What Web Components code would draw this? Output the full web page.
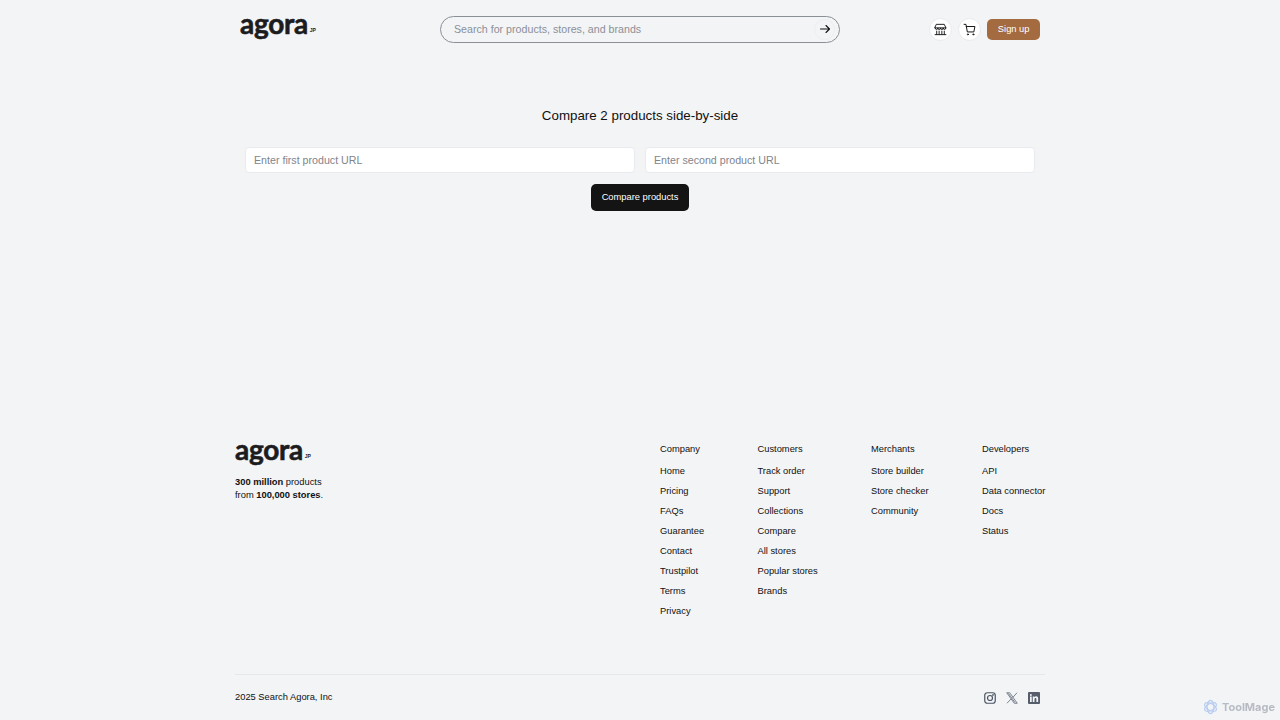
<!DOCTYPE html>
<html lang="en">
<head>
<meta charset="utf-8">
<title>Compare products - Agora</title>
<style>
  html, body { margin: 0; height: 720px; overflow: hidden; background: #f3f4f6; }
  body { font-family: "Liberation Sans", Arial, sans-serif; color: #111; }
</style>
</head>
<body>
<agora-page>
  <site-header slot="header"></site-header>
  <compare-form slot="main"></compare-form>
  <site-footer slot="footer"></site-footer>
</agora-page>
<tool-mage></tool-mage>

<script>
class AgoraPage extends HTMLElement {
  constructor() {
    super();
    this.attachShadow({ mode: 'open' });
    this.shadowRoot.innerHTML = `
      <style>
        :host { display: flex; flex-direction: column; width: 810px; height: 720px; margin: 0 auto; }
        main { flex: 1; }
      </style>
      <slot name="header"></slot>
      <main><slot name="main"></slot></main>
      <slot name="footer"></slot>`;
  }
}

class AgoraLogo extends HTMLElement {
  constructor() {
    super();
    this.attachShadow({ mode: 'open' });
    this.shadowRoot.innerHTML = `
      <style>
        :host { display: inline-flex; align-items: baseline; color: #1c1c1e; line-height: 1; }
        .word {
          font: 700 28px Lato, "Liberation Sans", sans-serif;
          letter-spacing: -0.3px;
          -webkit-text-stroke: 0.6px currentColor;
        }
        .jp { font: 700 5px "Liberation Sans", sans-serif; margin-left: 2px; position: relative; top: -2px; }
      </style>
      <span class="word">agora</span><span class="jp">JP</span>`;
  }
}

class SearchBox extends HTMLElement {
  constructor() {
    super();
    this.attachShadow({ mode: 'open' });
    this.shadowRoot.innerHTML = `
      <style>
        :host { display: flex; align-items: center; box-sizing: border-box; width: 400px; height: 27px;
          padding: 0 4px 0 13px; border: 1px solid #8b8f96; border-radius: 14px; }
        input { flex: 1; min-width: 0; border: 0; outline: 0; padding: 0; background: transparent;
          font: 10.67px "Liberation Sans", sans-serif; color: #111; }
        input::placeholder { color: #8b9099; opacity: 1; }
        button { display: flex; align-items: center; justify-content: center; width: 21px; height: 21px; padding: 0;
          border: 1px solid #eceef0; border-radius: 50%; background: #f3f4f6; color: #111; }
      </style>
      <input placeholder="Search for products, stores, and brands">
      <button aria-label="Search">
        <svg width="12" height="12" viewBox="0 0 24 24" fill="none" stroke="currentColor" stroke-width="2.2" stroke-linecap="round" stroke-linejoin="round"><path d="M3 12h18M14 5l7 7-7 7"/></svg>
      </button>`;
  }
}

class IconButton extends HTMLElement {
  constructor() {
    super();
    this.attachShadow({ mode: 'open' });
    this.shadowRoot.innerHTML = `
      <style>
        :host { display: flex; flex: none; align-items: center; justify-content: center; box-sizing: border-box;
          width: 23px; height: 23px; border: 1px solid #e8eaed; border-radius: 50%; background: #fff; color: #111; }
      </style>
      <slot></slot>`;
  }
}

class SiteHeader extends HTMLElement {
  constructor() {
    super();
    this.attachShadow({ mode: 'open' });
    this.shadowRoot.innerHTML = `
      <style>
        :host { display: grid; grid-template-columns: 1fr 400px 1fr; align-items: center; height: 58px; padding: 0 5px; box-sizing: border-box; }
        agora-logo { justify-self: start; margin-bottom: 13px; }
        .actions { display: flex; align-items: center; justify-content: flex-end; gap: 6px; }
        .signup { height: 21px; padding: 0 10.5px; border: 0; border-radius: 5px; background: #a36b3f; color: #fff;
          font: 9.33px "Liberation Sans", sans-serif; }
      </style>
      <agora-logo></agora-logo>
      <search-box></search-box>
      <div class="actions">
        <icon-button>
          <svg width="13" height="13" viewBox="0 0 24 24" fill="none" stroke="currentColor" stroke-width="1.7" stroke-linejoin="round" stroke-linecap="round"><path d="M5 2.500h14l3 6.500H2zM2 9a2.500 3 0 0 0 5 0 2.500 3 0 0 0 5 0 2.500 3 0 0 0 5 0 2.500 3 0 0 0 5 0M5 15v6M19 15v6M2 21.500h20M9.500 15v6M14.500 15v6"/></svg>
        </icon-button>
        <icon-button>
          <svg width="13" height="13" viewBox="0 0 24 24" fill="none" stroke="currentColor" stroke-width="1.8" stroke-linecap="round" stroke-linejoin="round"><path d="M2 2.500h3.500l2.500 14h12l2-10H6"/><circle cx="9" cy="21" r="1"/><circle cx="19" cy="21" r="1"/></svg>
        </icon-button>
        <button class="signup">Sign up</button>
      </div>`;
  }
}

class CompareForm extends HTMLElement {
  constructor() {
    super();
    this.attachShadow({ mode: 'open' });
    this.shadowRoot.innerHTML = `
      <style>
        :host { display: flex; flex-direction: column; align-items: center; padding: 49px 10px 0; }
        h1 { margin: 0 0 23px; font: 400 13.33px/17px "Liberation Sans", sans-serif; color: #111; }
        .inputs { display: grid; grid-template-columns: 1fr 1fr; gap: 10px; width: 100%; margin-bottom: 11px; }
        input { box-sizing: border-box; width: 100%; height: 26px; padding: 0 8px 1px; border: 1px solid #e8eaed; border-radius: 4px;
          background: #fff; outline: 0; font: 10.67px "Liberation Sans", sans-serif; color: #111; }
        input::placeholder { color: #7f848c; opacity: 1; }
        button { height: 27px; padding: 0 11px 1px; border: 0; border-radius: 5px; background: #141414; color: #fff;
          font: 9.33px "Liberation Sans", sans-serif; }
      </style>
      <h1>Compare 2 products side-by-side</h1>
      <div class="inputs">
        <input placeholder="Enter first product URL">
        <input placeholder="Enter second product URL">
      </div>
      <button>Compare products</button>`;
  }
}

class FooterColumn extends HTMLElement {
  constructor() {
    super();
    this.attachShadow({ mode: 'open' });
    const items = this.getAttribute('items').split('|');
    this.shadowRoot.innerHTML = `
      <style>
        :host { display: flex; flex-direction: column; font-size: 9.33px; line-height: 12px; color: #111; white-space: nowrap; }
        h2 { margin: 0 0 6px; font: inherit; height: 12px; }
        a { display: block; padding: 4px 0; color: inherit; text-decoration: none; }
      </style>
      <h2>${this.getAttribute('title')}</h2>
      ${items.map((item) => `<a href="#">${item}</a>`).join('')}`;
  }
}

class SiteFooter extends HTMLElement {
  constructor() {
    super();
    this.attachShadow({ mode: 'open' });
    this.shadowRoot.innerHTML = `
      <style>
        :host { display: block; font-size: 9.33px; color: #111; }
        .top { display: flex; justify-content: space-between; height: 232px; box-sizing: border-box; }
        .brand agora-logo { display: flex; height: 26px; margin-top: -10px; }
        .brand p { margin: 18px 0 0; line-height: 13px; }
        .cols { display: grid; grid-template-columns: 97.5px 113.5px 111px 63px; padding-top: 1px; }
        .bottom { display: flex; justify-content: space-between; align-items: center; height: 45px; border-top: 1px solid #e5e7eb; }
        .copy { padding-bottom: 1px; }
        .social { display: flex; gap: 10px; color: #4b5563; padding-right: 5px; }
        svg { display: block; }
      </style>
      <div class="top">
        <div class="brand">
          <agora-logo></agora-logo>
          <p><b>300 million</b> products<br>from <b>100,000 stores</b>.</p>
        </div>
        <div class="cols">
          <footer-column title="Company" items="Home|Pricing|FAQs|Guarantee|Contact|Trustpilot|Terms|Privacy"></footer-column>
          <footer-column title="Customers" items="Track order|Support|Collections|Compare|All stores|Popular stores|Brands"></footer-column>
          <footer-column title="Merchants" items="Store builder|Store checker|Community"></footer-column>
          <footer-column title="Developers" items="API|Data connector|Docs|Status"></footer-column>
        </div>
      </div>
      <div class="bottom">
        <span class="copy">2025 Search Agora, Inc</span>
        <div class="social">
          <svg width="12" height="12" viewBox="0 0 24 24" fill="none" stroke="currentColor" stroke-width="2.400"><rect x="1.500" y="1.500" width="21" height="21" rx="5"/><circle cx="12" cy="12" r="5"/><circle cx="18" cy="6" r="0.6"/></svg>
          <svg width="12" height="12" viewBox="0 0 24 24" fill="none" stroke="currentColor" stroke-width="1.400"><path d="M1.500 1.500h6l15 21h-6zM5 3l13 18M22 1.500L13.500 11M10.500 13.500L2 22.500"/></svg>
          <svg width="12" height="12" viewBox="0 0 24 24"><rect width="24" height="24" rx="2" fill="#565e6b"/><path fill="#f3f4f6" d="M4 9h3.500v11H4zM5.750 3.800a2 2 0 1 1 0 4 2 2 0 0 1 0-4zM9.500 9h3.300v1.600c.6-1 1.800-1.900 3.500-1.900 3.200 0 4 2 4 5V20h-3.500v-5.600c0-1.400-.3-2.600-1.800-2.600s-2 1.200-2 2.600V20H9.500z"/></svg>
        </div>
      </div>`;
  }
}

class ToolMage extends HTMLElement {
  constructor() {
    super();
    this.attachShadow({ mode: 'open' });
    this.shadowRoot.innerHTML = `
      <style>
        :host { position: fixed; right: 5px; bottom: 5px; display: flex; align-items: center; gap: 4px;
          font: 700 11px Inter, sans-serif; color: #b7bbc3; }
      </style>
      <svg width="15" height="16" viewBox="0 0 24 24" fill="none" stroke="#b9cdf0" stroke-width="2"><ellipse cx="12" cy="12" rx="5.500" ry="10.500"/><ellipse cx="12" cy="12" rx="5.500" ry="10.500" transform="rotate(60 12 12)"/><ellipse cx="12" cy="12" rx="5.500" ry="10.500" transform="rotate(120 12 12)"/></svg>
      <span>ToolMage</span>`;
  }
}

customElements.define('agora-page', AgoraPage);
customElements.define('agora-logo', AgoraLogo);
customElements.define('search-box', SearchBox);
customElements.define('icon-button', IconButton);
customElements.define('site-header', SiteHeader);
customElements.define('compare-form', CompareForm);
customElements.define('footer-column', FooterColumn);
customElements.define('site-footer', SiteFooter);
customElements.define('tool-mage', ToolMage);
</script>
</body>
</html>
